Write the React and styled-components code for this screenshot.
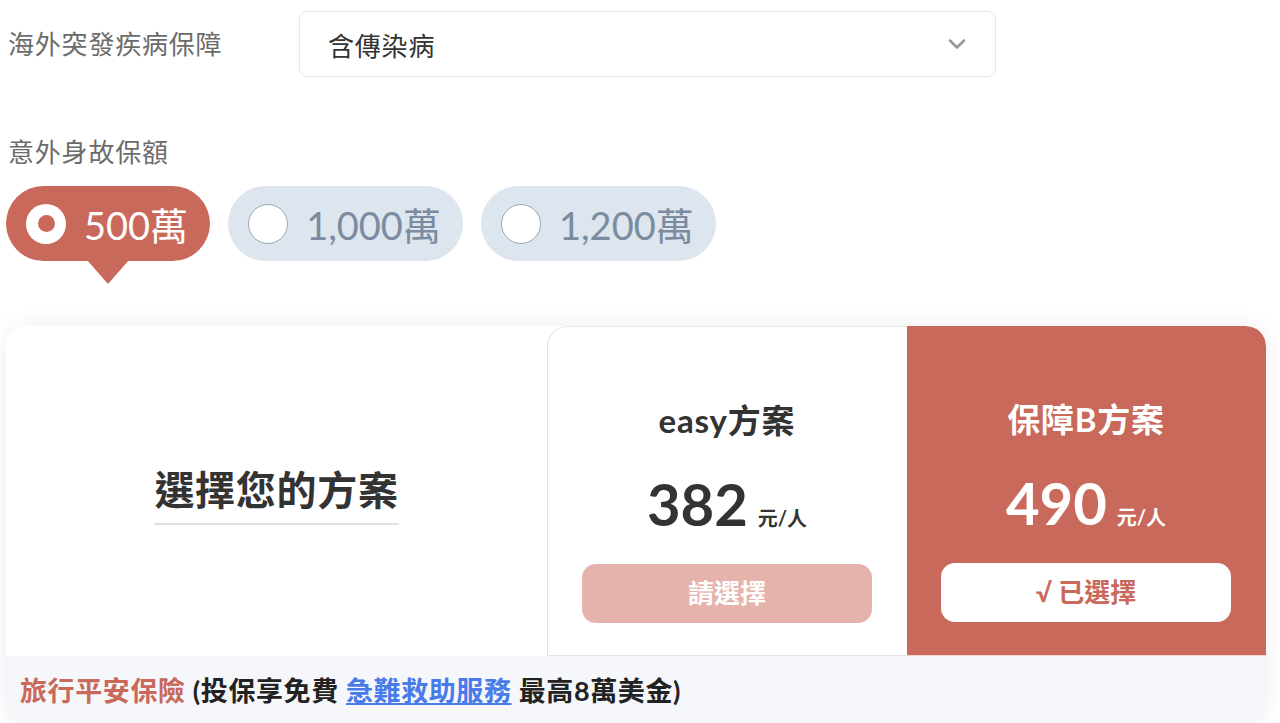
import React, { useState } from 'react';
import styled, { createGlobalStyle } from 'styled-components';
import { ChevronDown } from 'lucide-react';

const RED = '#c9695b';

const GlobalStyle = createGlobalStyle`
  html, body {
    margin: 0;
    padding: 0;
    background: #fff;
  }
  body {
    font-family: "Lato", "Noto Sans CJK TC", sans-serif;
    color: #333;
  }
  * { box-sizing: border-box; }
`;

const Page = styled.div`
  padding: 11px 14px 0 6px;
`;

const FieldRow = styled.div`
  display: flex;
  align-items: center;
`;

const Label = styled.div`
  width: 293px;
  padding-left: 2px;
  font-size: 26px;
  letter-spacing: 0.8px;
  color: #6b6b6b;
  line-height: 34px;
`;

const Select = styled.div`
  width: 697px;
  height: 66px;
  border: 1px solid #e6e6e6;
  border-radius: 8px;
  display: flex;
  align-items: center;
  justify-content: space-between;
  padding: 0 24px 0 28px;
  font-size: 26px;
  letter-spacing: 0.8px;
  color: #333;
  background: #fff;
`;

const Section = styled.div`
  margin-top: 58px;
`;

const PillRow = styled.div`
  display: flex;
  gap: 18px;
  margin-top: 17px;
`;

const Pill = styled.button`
  position: relative;
  height: 75px;
  border: none;
  border-radius: 38px;
  padding: 0 22px 0 20px;
  display: flex;
  align-items: center;
  gap: 18px;
  font-family: "Lato", "Noto Sans CJK TC", sans-serif;
  font-size: 38px;
  cursor: pointer;
  background: ${(p) => (p.$active ? RED : '#dde5ee')};
  color: ${(p) => (p.$active ? '#fff' : '#7b8ba0')};

  ${(p) =>
    p.$active &&
    `
    &::after {
      content: '';
      position: absolute;
      left: 50%;
      bottom: -23px;
      transform: translateX(-50%);
      border-left: 21px solid transparent;
      border-right: 21px solid transparent;
      border-top: 24px solid ${RED};
    }
  `}
`;

const RadioDot = styled.span`
  width: 40px;
  height: 40px;
  border-radius: 50%;
  background: #fff;
  display: flex;
  align-items: center;
  justify-content: center;
  border: ${(p) => (p.$active ? 'none' : '1.5px solid #98a6b9')};

  &::before {
    content: '';
    width: 17px;
    height: 17px;
    border-radius: 50%;
    background: ${(p) => (p.$active ? RED : 'transparent')};
  }
`;

const Card = styled.div`
  margin-top: 65px;
  border-radius: 20px;
  background: #fff;
  box-shadow: 0 0 22px rgba(0, 0, 0, 0.07);
  overflow: hidden;
`;

const PlanGrid = styled.div`
  display: grid;
  grid-template-columns: 541px 360px 1fr;
  height: 330px;
`;

const IntroCell = styled.div`
  display: flex;
  align-items: center;
  justify-content: center;
`;

const IntroTitle = styled.h2`
  margin: 0;
  font-size: 40px;
  letter-spacing: 0.7px;
  font-weight: 700;
  color: #333;
  line-height: 54px;
  padding-bottom: 6px;
  border-bottom: 2px solid #e2e2e2;
  transform: translateY(3px);
`;

const PlanCol = styled.div`
  display: flex;
  flex-direction: column;
  align-items: center;
  padding: 73px 35px 0 34px;
  background: ${(p) => (p.$selected ? RED : '#fff')};
  color: ${(p) => (p.$selected ? '#fff' : '#333')};
  border-bottom: 1px solid ${(p) => (p.$selected ? '#f0d6d2' : '#e3e3e3')};
  ${(p) =>
    p.$selected
      ? 'border-top-right-radius: 20px;'
      : `
    border-left: 1px solid #e3e3e3;
    border-top: 1px solid #ececec;
    border-top-left-radius: 20px;
  `}
`;

const PlanName = styled.div`
  font-size: 33px;
  font-weight: 700;
  letter-spacing: 0.8px;
  line-height: 40px;
`;

const PriceRow = styled.div`
  display: flex;
  align-items: baseline;
  gap: 10px;
  margin-top: 32px;
  line-height: 64px;
`;

const Price = styled.span`
  font-size: 58px;
  font-weight: 700;
`;

const Unit = styled.span`
  font-size: 20px;
  font-weight: 700;
`;

const PlanButton = styled.button`
  margin-top: 14px;
  width: 100%;
  height: 59px;
  padding: 0 0 5px;
  border: none;
  border-radius: 14px;
  font-family: "Lato", "Noto Sans CJK TC", sans-serif;
  font-size: 26px;
  font-weight: 700;
  cursor: pointer;
  background: ${(p) => (p.$selected ? '#fff' : '#e5b3ab')};
  color: ${(p) => (p.$selected ? RED : '#fff')};
`;

const Footer = styled.div`
  background: #f5f7fa;
  padding: 20px 14px 20px 14px;
  font-size: 27px;
  letter-spacing: 0.6px;
  font-weight: 700;
  line-height: 30px;
  color: #222;
`;

const Highlight = styled.span`
  color: ${RED};
`;

const Link = styled.a`
  color: #4a7bea;
  text-decoration: underline;
`;

const amounts = ['500萬', '1,000萬', '1,200萬'];

const plans = [
  { id: 'easy', name: 'easy方案', price: 382 },
  { id: 'b', name: '保障B方案', price: 490 },
];

export default function App() {
  const [amount, setAmount] = useState(0);
  const [plan, setPlan] = useState('b');

  return (
    <Page>
      <GlobalStyle />
      <FieldRow>
        <Label>海外突發疾病保障</Label>
        <Select>
          含傳染病
          <ChevronDown size={28} color="#999" strokeWidth={2.2} />
        </Select>
      </FieldRow>

      <Section>
        <Label>意外身故保額</Label>
        <PillRow>
          {amounts.map((a, i) => (
            <Pill key={a} $active={amount === i} onClick={() => setAmount(i)}>
              <RadioDot $active={amount === i} />
              {a}
            </Pill>
          ))}
        </PillRow>
      </Section>

      <Card>
        <PlanGrid>
          <IntroCell>
            <IntroTitle>選擇您的方案</IntroTitle>
          </IntroCell>
          {plans.map((p) => {
            const selected = plan === p.id;
            return (
              <PlanCol key={p.id} $selected={selected}>
                <PlanName>{p.name}</PlanName>
                <PriceRow>
                  <Price>{p.price}</Price>
                  <Unit>元/人</Unit>
                </PriceRow>
                <PlanButton $selected={selected} onClick={() => setPlan(p.id)}>
                  {selected ? '√ 已選擇' : '請選擇'}
                </PlanButton>
              </PlanCol>
            );
          })}
        </PlanGrid>
        <Footer>
          <Highlight>旅行平安保險</Highlight> (投保享免費 <Link href="#">急難救助服務</Link> 最高8萬美金)
        </Footer>
      </Card>
    </Page>
  );
}
